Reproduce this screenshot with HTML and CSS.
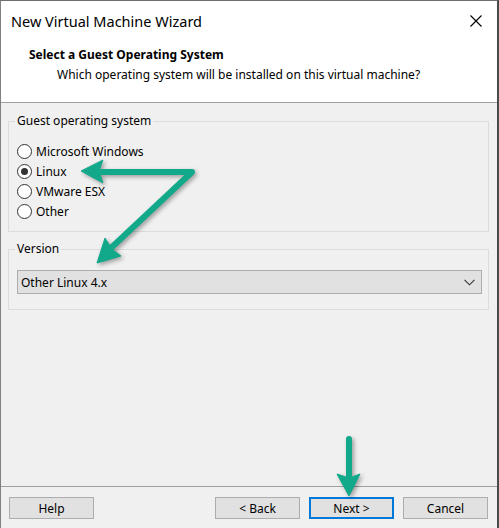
FILE: index.html
```html
<!DOCTYPE html>
<html>
<head>
<meta charset="utf-8">
<link rel="stylesheet" href="styles.css">
</head>
<body>
<div class="window">
  <div class="titlebar">
    <span class="title">New Virtual Machine Wizard</span>
    <svg class="close" width="12" height="12" viewBox="0 0 12 12"><path d="M0.5 0.5 L11.5 11.5 M11.5 0.5 L0.5 11.5" stroke="#000" stroke-width="1.1" fill="none"/></svg>
  </div>
  <div class="header">
    <div class="h-title">Select a Guest Operating System</div>
    <div class="h-sub">Which operating system will be installed on this virtual machine?</div>
  </div>
  <div class="body">
    <fieldset class="group">
      <legend>Guest operating system</legend>
      <div class="radios">
        <div class="radio"><span class="dot"></span>Microsoft Windows</div>
        <div class="radio checked"><span class="dot"></span>Linux</div>
        <div class="radio"><span class="dot"></span>VMware ESX</div>
        <div class="radio"><span class="dot"></span>Other</div>
      </div>
    </fieldset>
    <fieldset class="group group2">
      <legend>Version</legend>
      <div class="select">
        <span>Other Linux 4.x</span>
        <svg width="11" height="7" viewBox="0 0 11 7"><path d="M0.5 0.8 L5.5 5.8 L10.5 0.8" stroke="#333" stroke-width="1.1" fill="none"/></svg>
      </div>
    </fieldset>
  </div>
  <div class="footer">
    <button class="btn">Help</button>
    <div class="spacer"></div>
    <button class="btn">&lt; Back</button>
    <button class="btn primary">Next &gt;</button>
    <button class="btn">Cancel</button>
  </div>
  <svg class="arrows" width="499" height="528" viewBox="0 0 499 528">
    <g fill="#12a98b" stroke="#12a98b">
      <path d="M101 172 L192 172 L112 247" fill="none" stroke-width="6" stroke-linejoin="round" stroke-linecap="round"/>
      <polygon points="81,171 103,160 99,171 103,183" stroke-width="1" stroke-linejoin="round"/>
      <polygon points="97,263 105,238 112,249 121,256" stroke-width="1" stroke-linejoin="round"/>
      <path d="M349 439 L349 477" fill="none" stroke-width="6" stroke-linecap="round"/>
      <polygon points="349,496 337,474 349,478 360,474" stroke-width="1" stroke-linejoin="round"/>
    </g>
  </svg>
</div>
</body>
</html>
```

FILE: styles.css
```css
* { box-sizing: border-box; }
html, body { margin: 0; padding: 0; }
body {
  width: 499px;
  height: 528px;
  overflow: hidden;
  font-family: "Noto Sans", "Open Sans", sans-serif;
  font-size: 12px;
  color: #000;
  background: #f0f0f0;
}
.window {
  position: relative;
  width: 499px;
  height: 528px;
  display: flex;
  flex-direction: column;
  border-top: 1px solid #6e6e6e;
  border-left: 1px solid #808080;
  border-right: 2px solid #4a4a4a;
  background: #f0f0f0;
}
.titlebar {
  height: 39px;
  background: #fff;
  display: flex;
  align-items: center;
  justify-content: space-between;
  padding: 0 15px 0 10px;
}
.title {
  font-size: 14.5px;
  color: #000;
}
.close { display: block; }
.header {
  background: #fff;
  padding: 5px 0 17px 28px;
  border-bottom: 1px solid #a0a0a0;
}
.h-title {
  font-weight: bold;
  line-height: 20px;
}
.h-sub {
  line-height: 20px;
  padding-left: 28px;
}
.body {
  flex: 1;
  padding: 10px 8px 0 7px;
}
.group {
  margin: 0;
  border: 1px solid #dcdcdc;
  padding: 0 0 10px 6px;
}
.group legend {
  padding: 0 2px;
  line-height: 16px;
}
.radios {
  margin-top: 12px;
  margin-left: 2px;
}
.radio {
  height: 20px;
  display: flex;
  align-items: center;
}
.dot {
  width: 15px;
  height: 15px;
  border: 1px solid #333;
  border-radius: 50%;
  background: #fff;
  margin-right: 4px;
  display: flex;
  align-items: center;
  justify-content: center;
}
.checked .dot::after {
  content: "";
  width: 7px;
  height: 7px;
  border-radius: 50%;
  background: #333;
}
.group2 {
  margin-top: 9px;
  padding: 0 6px 15px 6px;
}
.select {
  margin: 13px 0 0 2px;
  height: 24px;
  border: 1px solid #adadad;
  background: #e1e1e1;
  display: flex;
  align-items: center;
  justify-content: space-between;
  padding: 0 6px 0 3px;
}
.select svg { display: block; }
.footer {
  height: 42px;
  border-top: 1px solid #a0a0a0;
  display: flex;
  align-items: flex-start;
  gap: 9px;
  padding: 10px 9px 0 8px;
}
.spacer { flex: 1; }
.btn {
  width: 85px;
  height: 22px;
  border: 1px solid #adadad;
  background: #e1e1e1;
  font-family: "Noto Sans", "Open Sans", sans-serif;
  font-size: 12px;
  color: #000;
  padding: 0;
  margin: 0;
}
.primary {
  border: 2px solid #0078d7;
}
.arrows {
  position: absolute;
  left: -1px;
  top: -1px;
  filter: drop-shadow(2px 2px 2px rgba(0,0,0,0.35));
  pointer-events: none;
}
```
